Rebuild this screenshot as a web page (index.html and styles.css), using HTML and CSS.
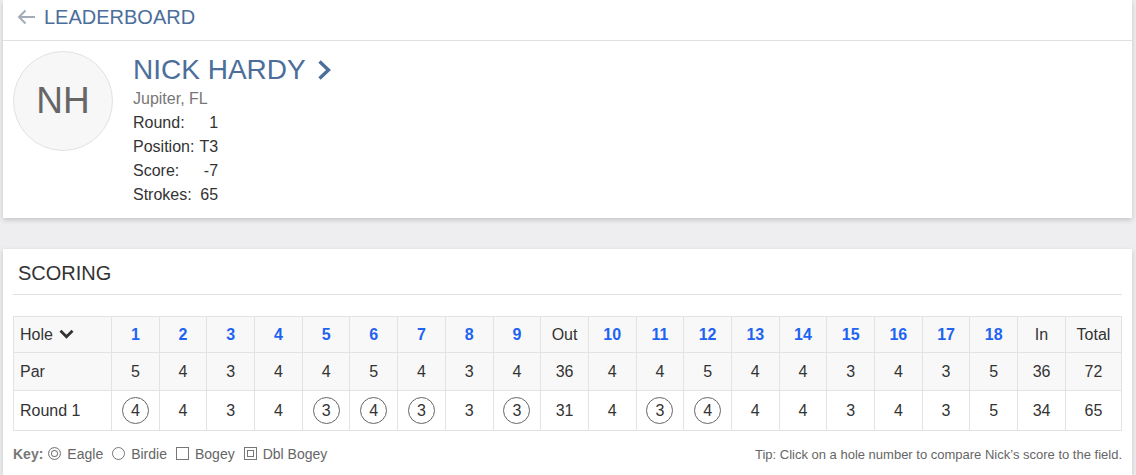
FILE: index.html
```html
<!DOCTYPE html>
<html>
<head>
<meta charset="utf-8">
<link rel="stylesheet" href="styles.css">
</head>
<body>
<div class="page">
  <section class="card player-card">
    <header class="back-bar">
      <svg class="back-arrow" width="19" height="16" viewBox="0 0 19 16"><path d="M18 8H2M8.5 1.5L2 8l6.5 6.5" fill="none" stroke="#a3acb6" stroke-width="2"/></svg>
      <span class="back-label">LEADERBOARD</span>
    </header>
    <div class="player">
      <div class="avatar">NH</div>
      <div class="info">
        <div class="name">NICK HARDY <svg class="name-chev" width="16" height="22" viewBox="0 0 16 22"><path d="M3.5 2.5l9 8.5-9 8.5" fill="none" stroke="#4c6e9b" stroke-width="3.4"/></svg></div>
        <div class="hometown">Jupiter, FL</div>
        <table class="stats">
          <tr><td>Round:</td><td class="val">1</td></tr>
          <tr><td>Position:</td><td class="val">T3</td></tr>
          <tr><td>Score:</td><td class="val">-7</td></tr>
          <tr><td>Strokes:</td><td class="val">65</td></tr>
        </table>
      </div>
    </div>
  </section>

  <section class="card scoring-card">
    <h2 class="scoring-title">SCORING</h2>
    <table class="scorecard">
      <colgroup><col class="c-first"><col span="20"><col class="c-total"></colgroup>
      <tr class="row-hole">
        <td class="label">Hole <svg class="hole-chev" width="15" height="10" viewBox="0 0 15 10"><path d="M1.5 1.8l6 6 6-6" fill="none" stroke="#333" stroke-width="2.8"/></svg></td>
        <td class="h">1</td><td class="h">2</td><td class="h">3</td><td class="h">4</td><td class="h">5</td><td class="h">6</td><td class="h">7</td><td class="h">8</td><td class="h">9</td><td>Out</td>
        <td class="h">10</td><td class="h">11</td><td class="h">12</td><td class="h">13</td><td class="h">14</td><td class="h">15</td><td class="h">16</td><td class="h">17</td><td class="h">18</td><td>In</td><td>Total</td>
      </tr>
      <tr class="row-par">
        <td class="label">Par</td>
        <td>5</td><td>4</td><td>3</td><td>4</td><td>4</td><td>5</td><td>4</td><td>3</td><td>4</td><td>36</td>
        <td>4</td><td>4</td><td>5</td><td>4</td><td>4</td><td>3</td><td>4</td><td>3</td><td>5</td><td>36</td><td>72</td>
      </tr>
      <tr class="row-round">
        <td class="label">Round 1</td>
        <td><span class="birdie">4</span></td><td>4</td><td>3</td><td>4</td><td><span class="birdie">3</span></td><td><span class="birdie">4</span></td><td><span class="birdie">3</span></td><td>3</td><td><span class="birdie">3</span></td><td>31</td>
        <td>4</td><td><span class="birdie">3</span></td><td><span class="birdie">4</span></td><td>4</td><td>4</td><td>3</td><td>4</td><td>3</td><td>5</td><td>34</td><td>65</td>
      </tr>
    </table>
    <div class="footer">
      <div class="key">
        <b class="key-label">Key:</b>
        <span class="key-item"><span class="k-icon k-eagle"></span>Eagle</span>
        <span class="key-item"><span class="k-icon k-birdie"></span>Birdie</span>
        <span class="key-item"><span class="k-icon k-bogey"></span>Bogey</span>
        <span class="key-item"><span class="k-icon k-dbl"></span>Dbl Bogey</span>
      </div>
      <div class="tip">Tip: Click on a hole number to compare Nick’s score to the field.</div>
    </div>
  </section>
</div>
</body>
</html>
```

FILE: styles.css
```css
* { box-sizing: border-box; }
html, body { margin: 0; padding: 0; }
body {
  background: #eeedf0;
  font-family: "Liberation Sans", Arial, sans-serif;
  color: #333;
  height: 475px;
  overflow: hidden;
}
.page {
  padding: 0 4px 0 3px;
}
.card {
  background: #fff;
  box-shadow: 0 2px 5px rgba(0, 0, 0, 0.18);
}
.player-card { margin-bottom: 31px; }

.back-bar {
  height: 41px;
  border-bottom: 1px solid #e0e0e0;
  display: flex;
  align-items: flex-start;
  padding-left: 14px;
}
.back-arrow { margin-top: 9px; margin-right: 8px; }
.back-label {
  font-size: 20px;
  line-height: 34px;
  color: #4c6e9b;
}

.player {
  display: flex;
  padding: 10px 10px 11px 10px;
}
.avatar {
  width: 100px;
  height: 100px;
  border-radius: 50%;
  border: 1px solid #e2e2e2;
  background: #f7f7f7;
  color: #666;
  font-size: 37px;
  display: flex;
  align-items: center;
  justify-content: center;
  flex-shrink: 0;
}
.info {
  margin-left: 20px;
  padding-top: 2px;
}
.name {
  font-size: 28px;
  line-height: 34px;
  color: #4c6e9b;
  display: flex;
  align-items: center;
}
.name-chev { margin-left: 10px; margin-top: -1px; }
.hometown {
  font-size: 16px;
  line-height: 24px;
  color: #777;
}
.stats {
  border-collapse: collapse;
  font-size: 16px;
  line-height: 24px;
  color: #333;
}
.stats td { padding: 0 5px 0 0; }
.stats td.val { text-align: right; padding: 0; }

.scoring-card {
  height: 226px;
  padding: 0 10px;
}
.scoring-title {
  margin: 0;
  font-weight: normal;
  font-size: 20px;
  line-height: 24px;
  padding: 12px 5px 9px;
  border-bottom: 1px solid #e0e0e0;
  color: #333;
}
.scorecard {
  margin-top: 21px;
  width: 100%;
  border-collapse: collapse;
  table-layout: fixed;
  font-size: 16px;
}
.c-first { width: 98px; }
.c-total { width: 56px; }
.scorecard td {
  border: 1px solid #e3e3e3;
  text-align: center;
  padding: 0;
  color: #333;
}
.scorecard td.label {
  text-align: left;
  padding-left: 6px;
}
.row-hole td { height: 36px; background: #f8f8f8; }
.row-par td { height: 38px; background: #f8f8f8; }
.row-round td { height: 40px; background: #fff; }
.scorecard td.h {
  color: #1f63f2;
  font-weight: bold;
}
.hole-chev { margin-left: 2px; vertical-align: 1px; }
.birdie {
  display: inline-flex;
  align-items: center;
  justify-content: center;
  width: 27px;
  height: 27px;
  border: 1px solid #666;
  border-radius: 50%;
  vertical-align: middle;
}

.footer {
  display: flex;
  justify-content: space-between;
  align-items: center;
  margin-top: 14px;
}
.key {
  display: flex;
  align-items: center;
  font-size: 14px;
  color: #666;
}
.key-label { color: #777; margin-right: 5px; }
.key-item {
  display: inline-flex;
  align-items: center;
  margin-right: 9px;
}
.k-icon {
  display: inline-block;
  width: 13px;
  height: 13px;
  border: 1px solid #777;
  margin-right: 6px;
}
.k-eagle {
  border-radius: 50%;
  box-shadow: inset 0 0 0 2px #fff, inset 0 0 0 3px #777;
}
.k-birdie { border-radius: 50%; }
.k-dbl { box-shadow: inset 0 0 0 2px #fff, inset 0 0 0 3px #777; }
.tip {
  font-size: 13px;
  color: #666;
  padding-top: 2px;
}
```
